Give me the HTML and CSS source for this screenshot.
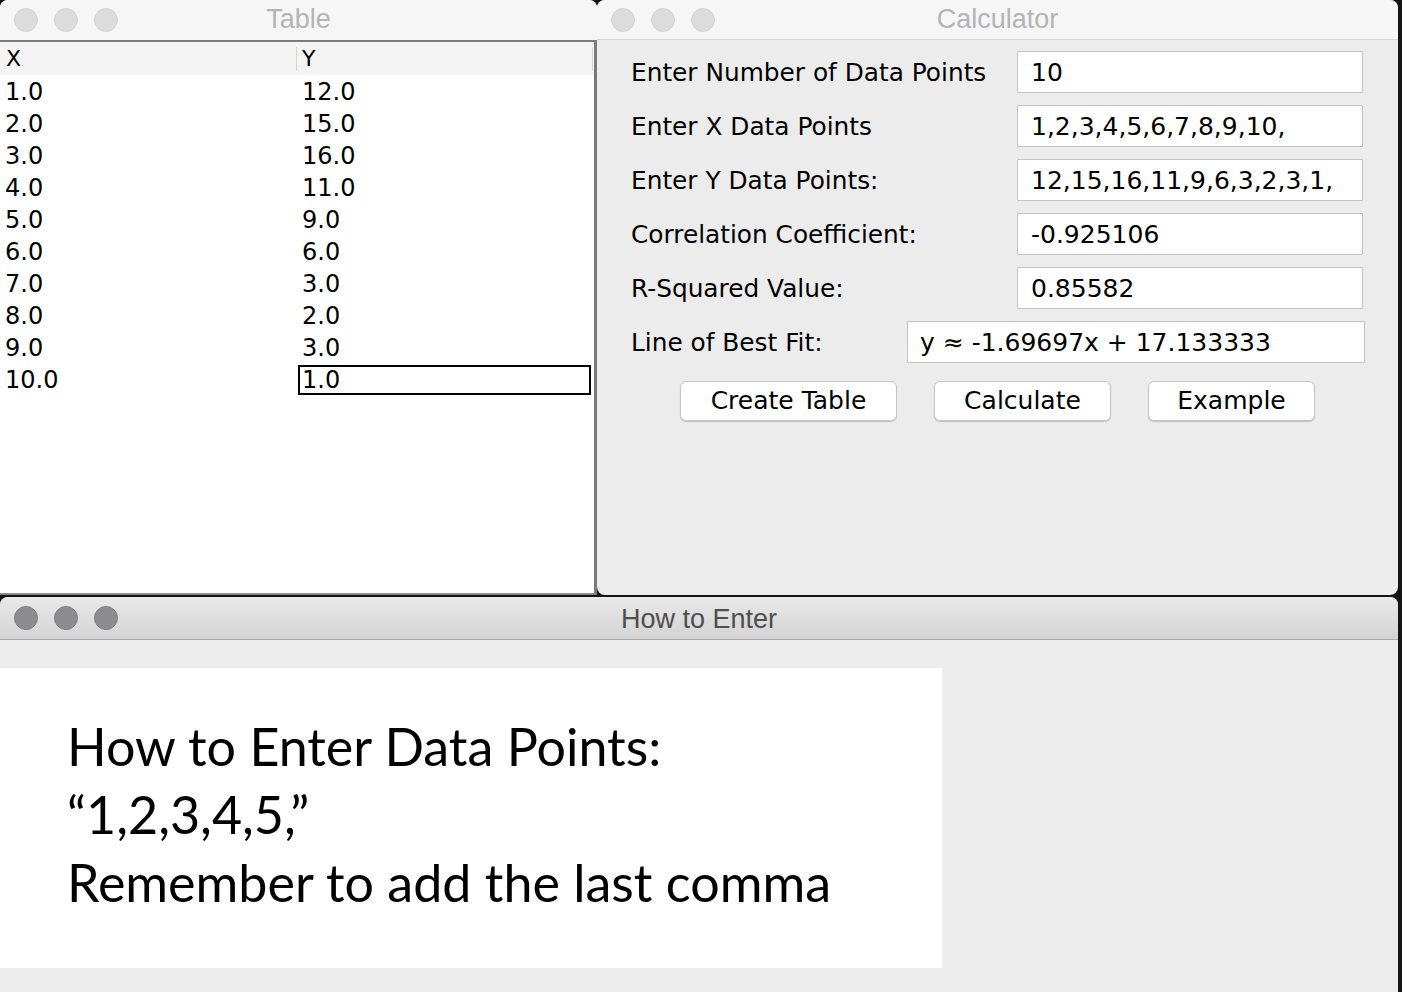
FILE: index.html
```html
<!DOCTYPE html>
<html>
<head>
<meta charset="utf-8">
<title>Regression Calculator</title>
<link rel="stylesheet" href="styles.css">
</head>
<body>
<div class="desktop">
  <div class="top-row">
    <div class="win table-win">
      <div class="titlebar inactive">
        <div class="lights"><span></span><span></span><span></span></div>
        <div class="title">Table</div>
        <div></div>
      </div>
      <div class="table-body">
        <div class="thead">
          <div class="th">X</div>
          <div class="th">Y</div>
        </div>
        <div class="tr"><div class="td">1.0</div><div class="td">12.0</div></div>
        <div class="tr"><div class="td">2.0</div><div class="td">15.0</div></div>
        <div class="tr"><div class="td">3.0</div><div class="td">16.0</div></div>
        <div class="tr"><div class="td">4.0</div><div class="td">11.0</div></div>
        <div class="tr"><div class="td">5.0</div><div class="td">9.0</div></div>
        <div class="tr"><div class="td">6.0</div><div class="td">6.0</div></div>
        <div class="tr"><div class="td">7.0</div><div class="td">3.0</div></div>
        <div class="tr"><div class="td">8.0</div><div class="td">2.0</div></div>
        <div class="tr"><div class="td">9.0</div><div class="td">3.0</div></div>
        <div class="tr"><div class="td">10.0</div><div class="td sel"><span>1.0</span></div></div>
      </div>
    </div>
    <div class="win calc-win">
      <div class="titlebar inactive">
        <div class="lights"><span></span><span></span><span></span></div>
        <div class="title">Calculator</div>
        <div></div>
      </div>
      <div class="calc-body">
        <div class="frow"><div class="label">Enter Number of Data Points</div><div class="field">10</div></div>
        <div class="frow"><div class="label">Enter X Data Points</div><div class="field">1,2,3,4,5,6,7,8,9,10,</div></div>
        <div class="frow"><div class="label">Enter Y Data Points:</div><div class="field">12,15,16,11,9,6,3,2,3,1,</div></div>
        <div class="frow"><div class="label">Correlation Coefficient:</div><div class="field">-0.925106</div></div>
        <div class="frow"><div class="label">R-Squared Value:</div><div class="field">0.85582</div></div>
        <div class="frow"><div class="label">Line of Best Fit:</div><div class="field wide">y ≈ -1.69697x + 17.133333</div></div>
        <div class="buttons">
          <div class="btn b1">Create Table</div>
          <div class="btn b2">Calculate</div>
          <div class="btn b3">Example</div>
        </div>
      </div>
    </div>
  </div>
  <div class="win help-win">
    <div class="titlebar active">
      <div class="lights"><span></span><span></span><span></span></div>
      <div class="title">How to Enter</div>
      <div></div>
    </div>
    <div class="help-body">
      <div class="help-panel">
        <p>How to Enter Data Points:</p>
        <p>“1,2,3,4,5,”</p>
        <p>Remember to add the last comma</p>
      </div>
    </div>
  </div>
</div>
</body>
</html>
```

FILE: styles.css
```css
html, body {
  margin: 0;
  padding: 0;
  background: #141414;
}
.desktop {
  width: 1402px;
  height: 992px;
  overflow: hidden;
  display: flex;
  flex-direction: column;
  gap: 2px;
  font-family: "DejaVu Sans", "Liberation Sans", sans-serif;
  color: #000;
}
.top-row {
  display: flex;
  height: 595px;
}
.win {
  display: flex;
  flex-direction: column;
  overflow: hidden;
}
.table-win {
  width: 597px;
  background: #fff;
  border-radius: 8px 8px 0 0;
}
.calc-win {
  width: 801px;
  background: #ececec;
  border-radius: 8px;
}
.help-win {
  width: 1398px;
  flex: 1;
  background: #ececec;
  border-radius: 8px 8px 0 0;
}

/* title bars */
.titlebar {
  display: grid;
  grid-template-columns: 1fr auto 1fr;
  align-items: center;
  flex: none;
}
.titlebar.inactive {
  height: 39px;
  background: #f6f6f6;
  border-bottom: 1px solid #d6d6d6;
}
.titlebar.active {
  height: 42px;
  background: linear-gradient(#e9e9e9, #d3d3d3);
  border-bottom: 1px solid #a8a8a8;
}
.lights {
  display: flex;
  gap: 16px;
  padding-left: 14px;
}
.lights span {
  width: 22px;
  height: 22px;
  border-radius: 50%;
  background: #dcdcdc;
  border: 1px solid #d2d2d2;
}
.titlebar.active .lights span {
  background: #8d8d8f;
  border-color: #7b7b7d;
}
.title {
  font-family: "Liberation Sans", "Helvetica", sans-serif;
  font-size: 27px;
  color: #b4b4b4;
  margin-top: -1px;
}
.titlebar.active .title {
  color: #4e4e4e;
  margin-top: 2px;
}

/* table window */
.table-win .titlebar.inactive {
  border-bottom: none;
  height: 40px;
}
.table-body {
  flex: 1;
  background: #fff;
  border-top: 2px solid #7a7a7a;
  border-right: 3px solid #7a7a7a;
  border-bottom: 2px solid #8a8a8a;
  font-size: 24px;
}
.thead {
  display: grid;
  grid-template-columns: 297px 296px;
  height: 33px;
  background: #f4f4f4;
  align-items: center;
}
.th {
  padding-left: 6px;
  font-size: 22px;
  border-right: 1px solid #d6d6d6;
  height: 24px;
  line-height: 24px;
}
.th + .th {
  padding-left: 5px;
}
.tr {
  display: grid;
  grid-template-columns: 297px 296px;
  height: 32px;
}
.td {
  padding-left: 5px;
  line-height: 34px;
}
.td.sel {
  padding: 0;
  display: flex;
}
.td.sel span {
  flex: 1;
  margin: 2px 2px 2px 1px;
  border: 2px solid #000;
  padding-left: 2px;
  line-height: 26px;
}

/* calculator */
.calc-body {
  padding-top: 5px;
  display: flex;
  flex-direction: column;
}
.frow {
  height: 54px;
  display: flex;
  align-items: center;
  padding-left: 34px;
}
.label {
  font-size: 24.8px;
  white-space: nowrap;
}
.field {
  margin-left: auto;
  margin-right: 35px;
  box-sizing: border-box;
  width: 346px;
  height: 42px;
  background: #fff;
  border: 1px solid #c4c4c4;
  font-size: 25px;
  line-height: 42px;
  padding-left: 13px;
  white-space: nowrap;
}
.field.wide {
  width: 458px;
  margin-right: 33px;
  padding-left: 12px;
}
.buttons {
  margin-top: 12px;
  display: flex;
  justify-content: center;
  gap: 37px;
}
.btn {
  height: 38px;
  background: #fff;
  border: 1px solid #c6c6c6;
  border-radius: 6px;
  box-shadow: 0 1px 1px rgba(0, 0, 0, 0.18);
  font-size: 25px;
  line-height: 38px;
  text-align: center;
}
.b1 { width: 215px; }
.b2 { width: 175px; }
.b3 { width: 165px; }

/* help window */
.help-body {
  padding-top: 28px;
}
.help-panel {
  width: 942px;
  height: 300px;
  box-sizing: border-box;
  background: #fff;
  padding: 44px 0 0 67px;
  font-family: "Lato", "Liberation Sans", sans-serif;
  font-size: 52px;
  line-height: 68px;
  color: #000;
}
.help-panel p {
  margin: 0;
  white-space: nowrap;
}
```
